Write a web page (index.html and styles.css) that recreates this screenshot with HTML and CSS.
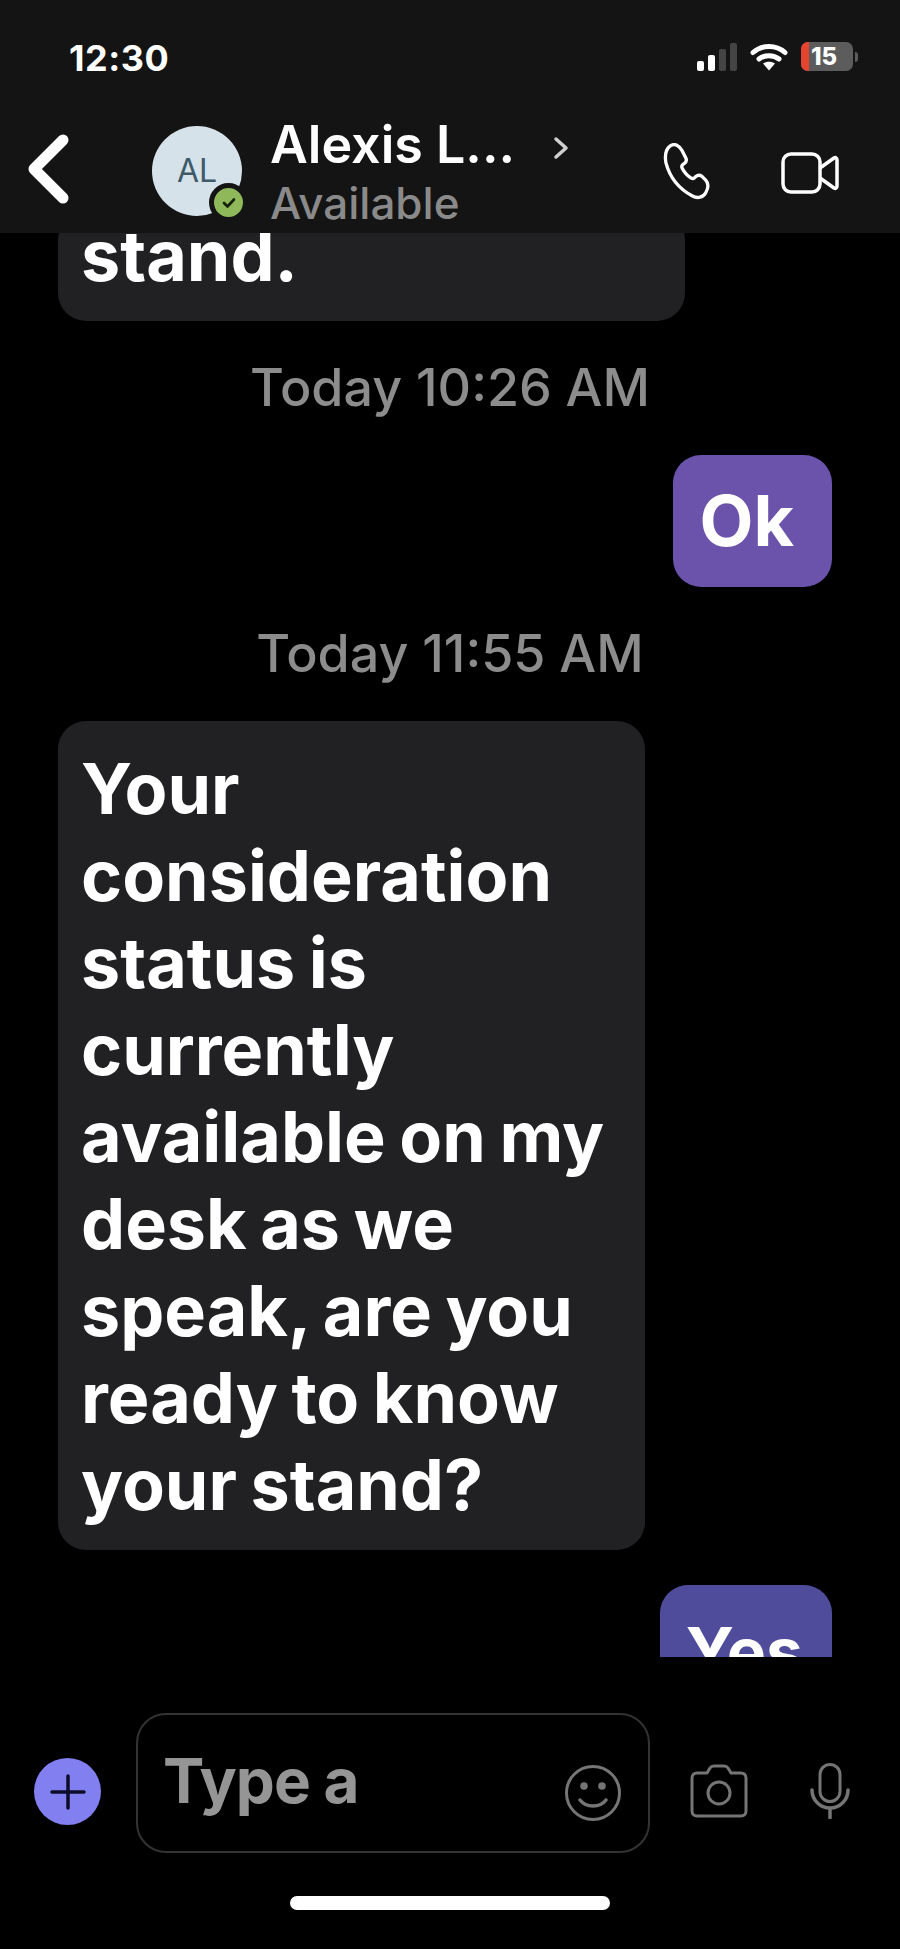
FILE: index.html
```html
<!DOCTYPE html>
<html lang="en">
<head>
    <meta charset="UTF-8">
    <meta name="viewport" content="width=device-width, initial-scale=1.0">
    <title>Alexis L...</title>
    <link rel="stylesheet" href="styles.css">
</head>
<body>
    <div class="phone">
        <header class="top">
            <div class="status-bar">
                <span class="clock">12:30</span>
                <div class="status-icons">
                    <svg class="signal" width="40" height="28" viewBox="0 0 40 28">
                        <rect x="0" y="18" width="7" height="10" rx="2" fill="#fff"/>
                        <rect x="11" y="12" width="7" height="16" rx="2" fill="#fff"/>
                        <rect x="22" y="6" width="7" height="22" rx="2" fill="#444"/>
                        <rect x="33" y="0" width="7" height="28" rx="2" fill="#444"/>
                    </svg>
                    <svg class="wifi" width="38" height="28" viewBox="0 0 38 28">
                        <path d="M3 9.5C12 1.5 26 1.5 35 9.5M9 16C14.500 11.500 23.500 11.500 29 16" fill="none" stroke="#fff" stroke-width="5" stroke-linecap="round"/>
                        <path d="M13 20.500C16.500 18 21.500 18 25 20.500L19 27.500Z" fill="#fff"/>
                    </svg>
                    <div class="battery">
                        <div class="battery-low"></div>
                        <span>15</span>
                    </div>
                    <div class="battery-tip"></div>
                </div>
            </div>
            <nav class="contact-bar">
                <svg class="back" width="42" height="70" viewBox="0 0 42 70">
                    <path d="M36 6L7 35L36 64" fill="none" stroke="#fff" stroke-width="11" stroke-linecap="round" stroke-linejoin="round"/>
                </svg>
                <div class="avatar">
                    AL
                    <div class="presence">
                        <svg width="14" height="12" viewBox="0 0 14 12">
                            <path d="M2 6L5.500 9.500L12 2.500" fill="none" stroke="#14210c" stroke-width="2.600" stroke-linecap="round" stroke-linejoin="round"/>
                        </svg>
                    </div>
                </div>
                <div class="contact-text">
                    <div class="contact-name">Alexis L...</div>
                    <div class="contact-state">Available</div>
                </div>
                <svg class="more" width="16" height="24" viewBox="0 0 16 24">
                    <path d="M3 3L13 12L3 21" fill="none" stroke="#d0d0d0" stroke-width="3.500" stroke-linecap="round" stroke-linejoin="round"/>
                </svg>
                <svg class="call" width="47" height="58" viewBox="0 0 140 175">
                    <path d="M22 8C35 0 48 8 56 22L68 45C71 52 69 58 63 62L58 66C55 69 55 72 57 76C63 88 72 98 84 106C88 108 91 108 94 105L98 101C103 97 110 96 116 100L128 112C137 122 136 136 128 150C120 165 103 168 88 160C50 140 20 105 8 60C4 38 8 18 22 8Z" fill="none" stroke="#fff" stroke-width="10" stroke-linejoin="round"/>
                </svg>
                <svg class="video" width="58" height="42" viewBox="0 0 58 42">
                    <rect x="2" y="2" width="37" height="38" rx="8" fill="none" stroke="#fff" stroke-width="3.500"/>
                    <path d="M39 16L53 6C54.500 5 56 6 56 8V34C56 36 54.500 37 53 36L39 26" fill="none" stroke="#fff" stroke-width="3.500" stroke-linejoin="round"/>
                </svg>
            </nav>
        </header>

        <main class="messages">
            <div class="bubble incoming first">stand.</div>
            <div class="stamp stamp-one">Today 10:26 AM</div>
            <div class="bubble outgoing ok">Ok</div>
            <div class="stamp stamp-two">Today 11:55 AM</div>
            <div class="bubble incoming long">Your consideration status is currently available on my desk as we speak, are you ready to know your stand?</div>
            <div class="bubble outgoing yes">Yes</div>
        </main>

        <footer class="composer">
            <div class="plus">
                <svg width="36" height="36" viewBox="0 0 36 36">
                    <path d="M18 2V34M2 18H34" fill="none" stroke="#0b0b2a" stroke-width="3.500" stroke-linecap="round"/>
                </svg>
            </div>
            <div class="input">
                <span class="placeholder">Type a</span>
                <svg class="smile" width="58" height="58" viewBox="0 0 58 58">
                    <circle cx="29" cy="29" r="26.500" fill="none" stroke="#757575" stroke-width="3"/>
                    <circle cx="20" cy="22" r="3.800" fill="#757575"/>
                    <circle cx="38" cy="22" r="3.800" fill="#757575"/>
                    <path d="M16 36C22 44 36 44 42 36" fill="none" stroke="#757575" stroke-width="3.500" stroke-linecap="round"/>
                </svg>
            </div>
            <svg class="camera" width="58" height="54" viewBox="0 0 58 54">
                <path d="M7 9H17L20 4C21 2.500 22 2 24 2H34C36 2 37 2.500 38 4L41 9H51C54 9 56 11 56 14V47C56 50 54 52 51 52H7C4 52 2 50 2 47V14C2 11 4 9 7 9Z" fill="none" stroke="#757575" stroke-width="3" stroke-linejoin="round"/>
                <circle cx="29" cy="29" r="11" fill="none" stroke="#757575" stroke-width="3"/>
            </svg>
            <svg class="mic" width="40" height="56" viewBox="0 0 40 56">
                <rect x="10" y="1.500" width="20" height="37" rx="10" fill="none" stroke="#757575" stroke-width="3"/>
                <path d="M2 27C2 37 10 45 20 45C30 45 38 37 38 27M20 45V55" fill="none" stroke="#757575" stroke-width="3.500" stroke-linecap="round"/>
            </svg>
        </footer>

        <div class="home-row">
            <div class="home-bar"></div>
        </div>
    </div>
</body>
</html>
```

FILE: styles.css
```css
body {
    margin: 0;
    padding: 0;
    background-color: #000;
    color: #fff;
    font-family: Inter, "Liberation Sans", sans-serif;
}

.phone {
    width: 900px;
    height: 1949px;
    display: flex;
    flex-direction: column;
    overflow: hidden;
}

.top {
    height: 233px;
    flex-shrink: 0;
    background-color: #141414;
}

.status-bar {
    height: 112px;
    box-sizing: border-box;
    padding: 42px 42px 0 69px;
    display: flex;
    justify-content: space-between;
    align-items: flex-start;
}

.clock {
    font-size: 36px;
    line-height: 32px;
    font-weight: 700;
    letter-spacing: 0.5px;
}

.status-icons {
    display: flex;
    align-items: center;
    height: 29px;
}

.wifi {
    margin-left: 13px;
}

.battery {
    margin-left: 13px;
    width: 52px;
    height: 29px;
    border-radius: 7px;
    background-color: #5c5c5c;
    overflow: hidden;
    display: flex;
    align-items: center;
}

.battery-low {
    width: 8px;
    height: 100%;
    background-color: #e5452f;
}

.battery span {
    margin-left: 2px;
    font-size: 24px;
    font-weight: 800;
    line-height: 29px;
}

.battery-tip {
    width: 3px;
    height: 10px;
    margin-left: 2px;
    border-radius: 0 3px 3px 0;
    background-color: #5c5c5c;
}

.contact-bar {
    height: 121px;
    display: flex;
    align-items: flex-start;
    padding-left: 27px;
}

.back {
    margin-top: 22px;
}

.avatar {
    position: relative;
    width: 90px;
    height: 90px;
    margin: 14px 0 0 83px;
    border-radius: 50%;
    background-color: #d6e2ea;
    color: #3f5a68;
    font-size: 32px;
    line-height: 90px;
    text-align: center;
}

.presence {
    position: absolute;
    right: -6px;
    bottom: -6px;
    width: 29px;
    height: 29px;
    border: 5px solid #141414;
    border-radius: 50%;
    background-color: #8fb85a;
    display: flex;
    align-items: center;
    justify-content: center;
}

.contact-text {
    margin-left: 28px;
    width: 260px;
    margin-top: 4px;
}

.contact-name {
    font-size: 52px;
    line-height: 58px;
    font-weight: 600;
    white-space: nowrap;
}

.contact-state {
    font-size: 44px;
    line-height: 58px;
    font-weight: 500;
    color: #8a8a8a;
}

.more {
    margin: 24px 0 0 23px;
}

.call {
    margin: 31px 0 0 94px;
}

.video {
    margin: 40px 0 0 71px;
}

.messages {
    flex: 1;
    overflow: hidden;
    display: flex;
    flex-direction: column;
}

.bubble {
    box-sizing: border-box;
    border-radius: 28px;
    font-size: 70px;
    line-height: 87px;
    font-weight: 700;
    word-spacing: -3px;
    flex-shrink: 0;
}

.incoming {
    margin-left: 58px;
    padding: 0 23px;
    background-color: #212123;
}

.outgoing {
    align-self: flex-end;
    margin-right: 68px;
}

.first {
    width: 627px;
    height: 109px;
    margin-top: -21px;
}

.stamp {
    text-align: center;
    font-size: 52px;
    line-height: 56px;
    font-weight: 500;
    color: #8c8c8c;
}

.stamp-one {
    margin-top: 39px;
}

.ok {
    margin-top: 39px;
    height: 132px;
    padding: 0 38px 0 26px;
    line-height: 132px;
    background-color: #6b52ab;
}

.stamp-two {
    margin-top: 39px;
}

.long {
    width: 587px;
    margin-top: 39px;
    padding-top: 24px;
    padding-bottom: 22px;
}

.yes {
    margin-top: 35px;
    height: 132px;
    padding: 0 29px 0 26px;
    font-size: 66px;
    line-height: 132px;
    background-color: #4f4c9c;
}

.composer {
    height: 195px;
    flex-shrink: 0;
    box-sizing: border-box;
    padding: 56px 0 0 34px;
    display: flex;
    align-items: center;
}

.plus {
    width: 67px;
    height: 67px;
    margin-top: 18px;
    border-radius: 50%;
    background-color: #8280f0;
    display: flex;
    align-items: center;
    justify-content: center;
}

.input {
    width: 514px;
    height: 140px;
    box-sizing: border-box;
    margin-left: 35px;
    padding: 0 26px 0 25px;
    border: 2px solid #333;
    border-radius: 30px;
    display: flex;
    align-items: center;
    justify-content: space-between;
}

.placeholder {
    margin-bottom: 4px;
    font-size: 62px;
    font-weight: 700;
    letter-spacing: -1px;
    color: #959595;
}

.smile {
    margin-top: 20px;
}

.camera {
    margin: 16px 0 0 40px;
}

.mic {
    margin: 16px 0 0 62px;
}

.home-row {
    height: 97px;
    flex-shrink: 0;
    box-sizing: border-box;
    display: flex;
    justify-content: center;
    padding-top: 44px;
}

.home-bar {
    width: 320px;
    height: 14px;
    border-radius: 7px;
    background-color: #fff;
}
```
